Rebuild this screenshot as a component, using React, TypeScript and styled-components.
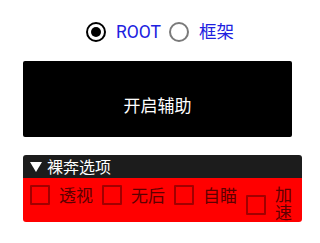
import React from "react";
import styled, { createGlobalStyle } from "styled-components";

const Global = createGlobalStyle`
  html, body { margin: 0; padding: 0; background: #ffffff; }
  body { font-family: "Noto Sans CJK SC", "Noto Sans", Roboto, sans-serif; }
`;

const Page = styled.div`
  width: 318px;
  height: 243px;
  box-sizing: border-box;
  padding-top: 22px;
  display: flex;
  flex-direction: column;
`;

const RadioGroup = styled.div`
  display: flex;
  justify-content: center;
  align-items: center;
  height: 20px;
  padding-left: 2px;
`;

const RadioItem = styled.label`
  display: flex;
  align-items: center;
  gap: 10px;
  margin-right: 8px;
  &:last-child { margin-right: 0; }
`;

const RadioCircle = styled.span<{ $checked?: boolean }>`
  width: 20px;
  height: 20px;
  box-sizing: border-box;
  border-radius: 50%;
  border: 2px solid ${(p) => (p.$checked ? "#000000" : "#7a7a7a")};
  display: flex;
  align-items: center;
  justify-content: center;
  &::after {
    content: "";
    display: ${(p) => (p.$checked ? "block" : "none")};
    width: 10px;
    height: 10px;
    border-radius: 50%;
    background: #000000;
  }
`;

const RadioText = styled.span`
  font-family: Roboto, "Noto Sans CJK SC", sans-serif;
  font-size: 17.5px;
  line-height: 20px;
  color: #2020e0;
`;

const BigButton = styled.button`
  margin: 19px 0 0 23px;
  width: 269px;
  height: 76px;
  border: none;
  border-radius: 2px;
  background: #000000;
  color: #ffffff;
  font-family: "Noto Sans CJK SC", sans-serif;
  font-size: 17px;
  padding: 10px 0 0 0;
  box-sizing: border-box;
`;

const Panel = styled.div`
  margin: 18px 0 0 23px;
  width: 279px;
`;

const PanelHeader = styled.div`
  height: 23px;
  background: #1c1c1c;
  color: #ffffff;
  border-radius: 3px 3px 0 0;
  display: flex;
  align-items: center;
  padding-left: 7px;
  font-size: 16px;
  line-height: 23px;
  gap: 5px;
`;

const Triangle = styled.span`
  width: 0;
  height: 0;
  border-left: 6px solid transparent;
  border-right: 6px solid transparent;
  border-top: 10px solid #ffffff;
  margin-top: 1px;
`;

const OptionRow = styled.div`
  min-height: 44px;
  background: #ff0000;
  border-radius: 0 0 3px 3px;
  display: flex;
  align-items: flex-start;
  box-sizing: border-box;
  padding: 7px 7px 0 7px;
  gap: 9px;
`;

const CheckItem = styled.label<{ $grow?: boolean }>`
  display: flex;
  align-items: center;
  gap: 9px;
  flex: ${(p) => (p.$grow ? "1 1 0" : "none")};
  min-width: 0;
`;

const CheckBox = styled.span<{ $shift?: boolean }>`
  flex: none;
  width: 20px;
  height: 20px;
  box-sizing: border-box;
  border: 2px solid #a10000;
  border-radius: 1px;
  margin-top: ${(p) => (p.$shift ? "3px" : "0")};
`;

const CheckText = styled.span`
  font-size: 17px;
  line-height: 18px;
  color: #5c0000;
`;

const options = ["透视", "无后", "自瞄", "加速"];

export default function App() {
  return (
    <>
      <Global />
      <Page>
        <RadioGroup>
          <RadioItem>
            <RadioCircle $checked />
            <RadioText>ROOT</RadioText>
          </RadioItem>
          <RadioItem>
            <RadioCircle />
            <RadioText>框架</RadioText>
          </RadioItem>
        </RadioGroup>
        <BigButton>开启辅助</BigButton>
        <Panel>
          <PanelHeader>
            <Triangle />
            <span>裸奔选项</span>
          </PanelHeader>
          <OptionRow>
            {options.map((o, i) => {
              const last = i === options.length - 1;
              return (
                <CheckItem key={o} $grow={last}>
                  <CheckBox $shift={last} />
                  <CheckText>{o}</CheckText>
                </CheckItem>
              );
            })}
          </OptionRow>
        </Panel>
      </Page>
    </>
  );
}
